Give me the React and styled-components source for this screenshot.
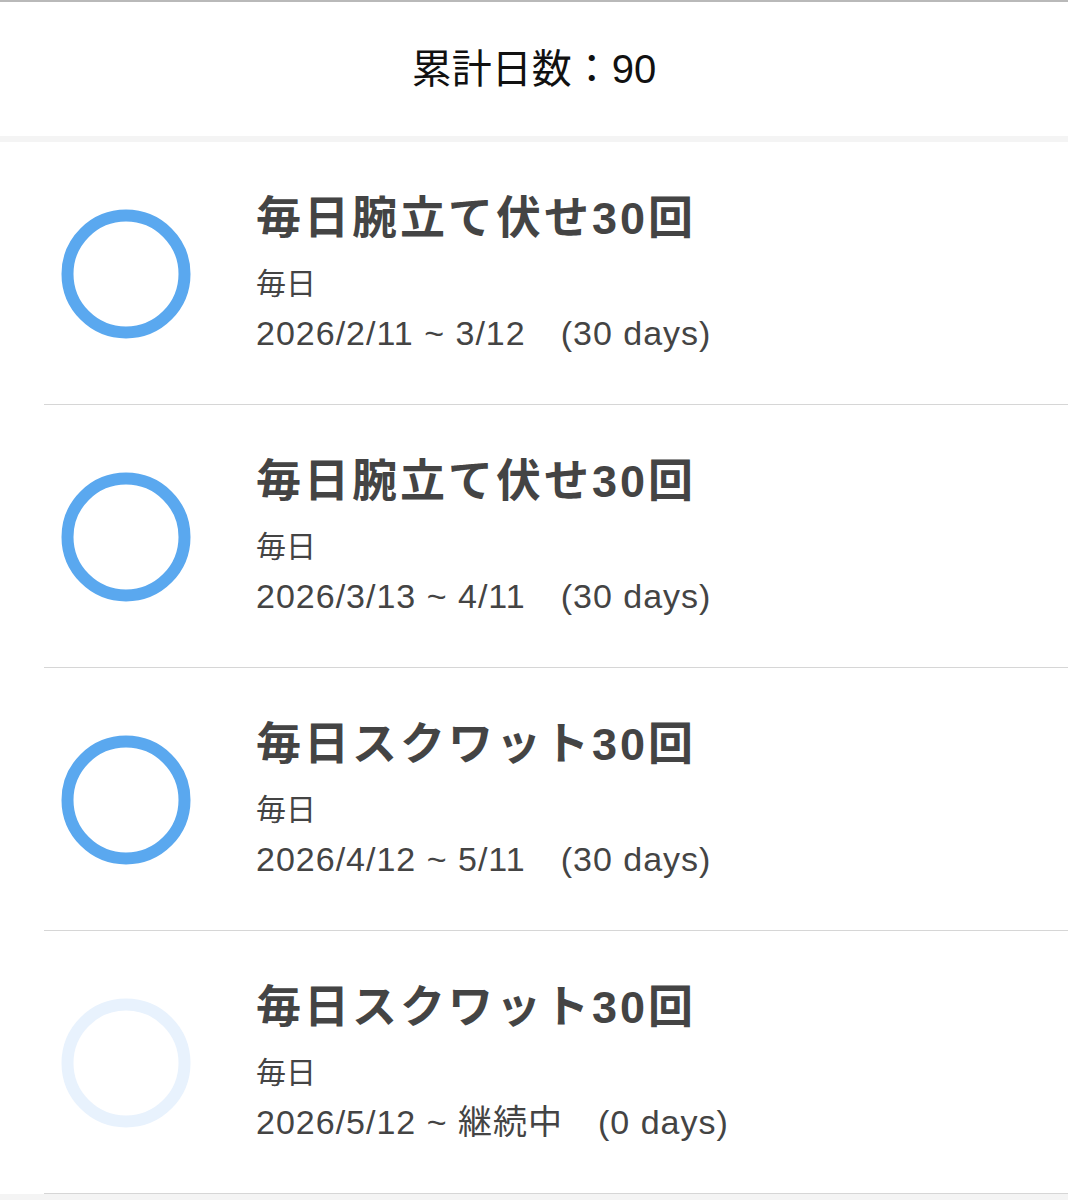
import React from 'react';
import styled, { createGlobalStyle } from 'styled-components';

const GlobalStyle = createGlobalStyle`
  html, body {
    margin: 0;
    padding: 0;
    background: #fff;
  }
  body {
    font-family: "Liberation Sans", "Noto Sans CJK JP", sans-serif;
  }
`;

const Page = styled.div`
  width: 1068px;
  height: 1200px;
  overflow: hidden;
  background: #f4f4f4;
  border-top: 2px solid #b9b9b9;
  box-sizing: border-box;
`;

const Header = styled.div`
  height: 134px;
  background: #fff;
  display: flex;
  align-items: center;
  justify-content: center;
  font-size: 40px;
  color: #111;
  margin-bottom: 6px;
  padding-bottom: 6px;
  box-sizing: border-box;
`;

const List = styled.div`
  background: #fff;
  padding-left: 44px;
`;

const Row = styled.div`
  height: 262px;
  display: flex;
  align-items: flex-start;
  border-bottom: 1px solid #d6d6d6;
`;

const RingBox = styled.div`
  width: 212px;
  flex: 0 0 212px;
  padding-top: 67px;
  padding-left: 17px;
  box-sizing: border-box;
`;

const Info = styled.div`
  display: flex;
  flex-direction: column;
  padding-top: 49px;
`;

const Title = styled.div`
  font-size: 45px;
  font-weight: 700;
  color: #444;
  line-height: 56px;
  letter-spacing: 3px;
  white-space: nowrap;
`;

const Sub = styled.div`
  font-size: 30px;
  color: #444;
  line-height: 50px;
  margin-top: 12px;
`;

const DateLine = styled.div`
  font-size: 34px;
  color: #444;
  line-height: 50px;
  letter-spacing: 1px;
  margin-top: -1px;
  white-space: pre;
`;

const Ring = ({ faded }) => (
  <svg width="130" height="130" viewBox="0 0 130 130">
    <circle
      cx="65"
      cy="65"
      r="58.5"
      fill="none"
      stroke={faded ? '#e8f2fd' : '#5aa8ef'}
      strokeWidth="12"
    />
  </svg>
);

const items = [
  { title: '毎日腕立て伏せ30回', freq: '毎日', range: '2026/2/11 ~ 3/12', days: 30 },
  { title: '毎日腕立て伏せ30回', freq: '毎日', range: '2026/3/13 ~ 4/11', days: 30 },
  { title: '毎日スクワット30回', freq: '毎日', range: '2026/4/12 ~ 5/11', days: 30 },
  { title: '毎日スクワット30回', freq: '毎日', range: '2026/5/12 ~ 継続中', days: 0, faded: true },
];

export default function App() {
  return (
    <>
      <GlobalStyle />
      <Page>
        <Header>累計日数：90</Header>
        <List>
          {items.map((item, i) => (
            <Row key={i}>
              <RingBox>
                <Ring faded={item.faded} />
              </RingBox>
              <Info>
                <Title>{item.title}</Title>
                <Sub>{item.freq}</Sub>
                <DateLine>
                  {item.range}{'　'}({item.days} days)
                </DateLine>
              </Info>
            </Row>
          ))}
        </List>
      </Page>
    </>
  );
}
